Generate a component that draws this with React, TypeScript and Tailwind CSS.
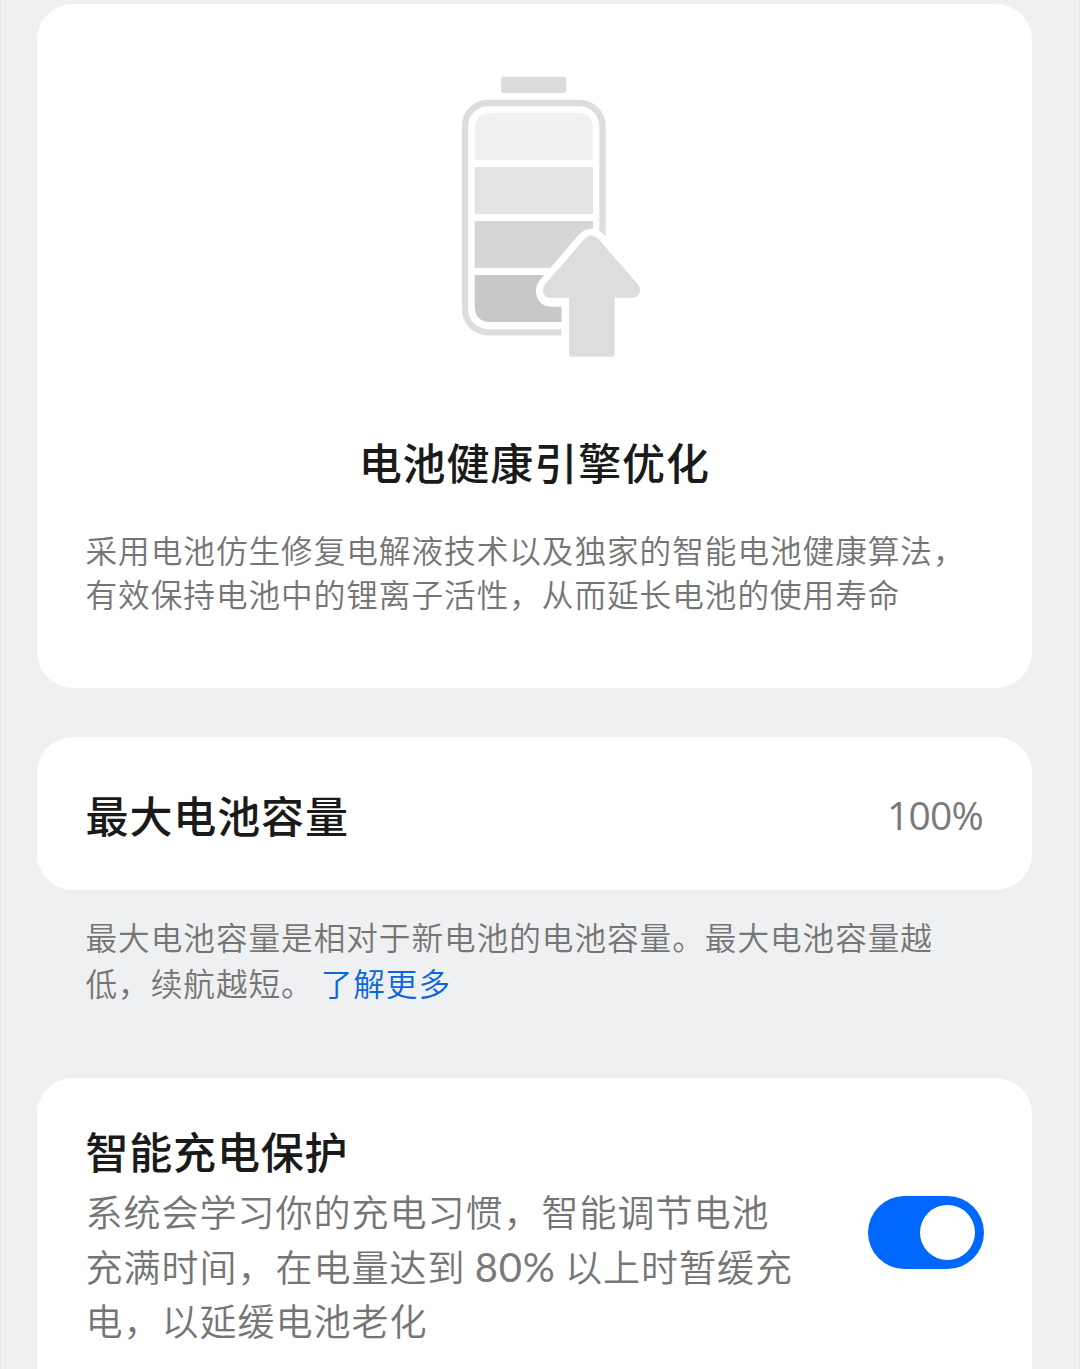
import { useState } from "react";

const BatteryIllustration = () => (
  <svg width="180" height="284" viewBox="461 75 180 284" fill="none" className="block">
    <rect x="501" y="76.7" width="65.3" height="16.3" rx="2.5" fill="#dcdcdc" />
    <rect x="465" y="103" width="137.5" height="229.3" rx="23" stroke="#dddddd" strokeWidth="6.3" />
    {/* Charge levels */}
    <path d="M474.7 160V129Q474.7 113 490.7 113H577Q593 113 593 129V160Z" fill="#f1f1f1" />
    <path d="M474.7 167H593V214H474.7Z" fill="#e3e3e3" />
    <path d="M474.7 221H593V268H474.7Z" fill="#d6d6d6" />
    <path d="M474.7 275H593V322H490.7Q474.7 322 474.7 306Z" fill="#c8c8c8" />
    {/* White gap between the arrow and the battery */}
    <path
      d="M579 234.500Q591.500 222.500 604 234.500L646 284V364H561.500V306.700H551C538 306.700 531.500 292 539.500 280.500Z"
      fill="#fff"
    />
    <path
      d="M584.5 239Q591.5 232 598.5 239L638 284.5C643 291 638.500 297.700 633 297.700H614.700V354Q614.700 356.800 612 356.800H571.700Q569 356.800 569 354V297.700H550C543.500 297.700 541 290 545 284.500Z"
      fill="#dddddd"
    />
  </svg>
);

export default function App() {
  const [smartCharge, setSmartCharge] = useState(true);

  return (
    <main className="flex h-[1369px] w-[1080px] flex-col overflow-hidden border-x border-[#e3e4e6] bg-[#eff0f2] pl-[35.500px] pr-[47px] pt-1 font-['Noto_Sans_CJK_SC',sans-serif] font-[350] text-[#757575]">
      {/* Intro card */}
      <section className="flex h-[684px] shrink-0 flex-col items-center rounded-[36px] bg-white px-[49px] pt-[71px]">
        <div className="pl-[33px]">
          <BatteryIllustration />
        </div>
        <h1 className="mt-[70px] text-[43px] leading-[64px] font-medium tracking-[0.9px] text-[#1a1a1a]">
          电池健康引擎优化
        </h1>
        <p className="mt-[34px] w-full text-[31.600px] leading-[44px] tracking-[1px] whitespace-nowrap">
          采用电池仿生修复电解液技术以及独家的智能电池健康算法，
          <br />
          有效保持电池中的锂离子活性，从而延长电池的使用寿命
        </p>
      </section>

      {/* Maximum capacity */}
      <section className="mt-[49px] flex h-[153px] shrink-0 items-center justify-between rounded-[36px] bg-white px-[49px]">
        <h2 className="text-[43px] leading-[64px] font-medium tracking-[0.9px] text-[#1a1a1a]">最大电池容量</h2>
        <span className="pt-[2px] font-['Open_Sans',sans-serif] text-[39px] leading-[48px] font-normal tracking-[-0.8px] text-[#7a7a7a]">
          100%
        </span>
      </section>
      <p className="mt-[23px] px-[49px] text-[31.600px] leading-[46px] tracking-[1px] whitespace-nowrap">
        最大电池容量是相对于新电池的电池容量。最大电池容量越
        <br />
        低，续航越短。
        <a className="ml-[7px] cursor-pointer text-[#0a66dc]">了解更多</a>
      </p>

      {/* Smart charging */}
      <section className="mt-[73px] flex h-[400px] shrink-0 items-start justify-between rounded-t-[36px] bg-white pl-[49px] pr-[48px] pt-[40px]">
        <div>
          <h2 className="text-[43px] leading-[64px] font-medium tracking-[0.8px] text-[#1a1a1a]">智能充电保护</h2>
          <p className="mt-[2px] text-[37px] leading-[54.500px] tracking-[1px] whitespace-nowrap">
            系统会学习你的充电习惯，智能调节电池
            <br />
            充满时间，在电量达到{" "}
            <span className="font-[Lato,sans-serif] text-[40px] leading-none font-normal tracking-[0.8px] text-[#7a7a7a]">80%</span>{" "}
            以上时暂缓充
            <br />
            电，以延缓电池老化
          </p>
        </div>
        <button
          role="switch"
          aria-checked={smartCharge}
          onClick={() => setSmartCharge(!smartCharge)}
          className={`mt-[78px] flex h-[73px] w-[116px] shrink-0 items-center rounded-full px-[9px] ${
            smartCharge ? "justify-end bg-[#0067ff]" : "justify-start bg-[#d9d9d9]"
          }`}
        >
          <span className="size-[55px] rounded-full bg-white" />
        </button>
      </section>
    </main>
  );
}
